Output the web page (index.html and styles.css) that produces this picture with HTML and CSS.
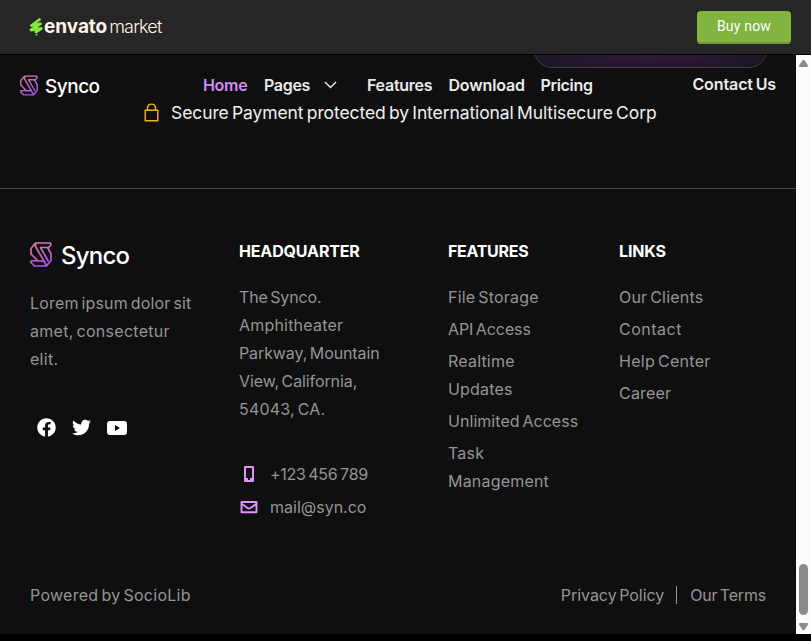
FILE: index.html
```html
<!DOCTYPE html>
<html lang="en">
<head>
<meta charset="utf-8">
<title>Synco</title>
<link rel="stylesheet" href="styles.css">
</head>
<body>
<svg class="defs" width="0" height="0" aria-hidden="true">
  <defs>
    <linearGradient id="brand" x1="0" y1="0" x2="0.35" y2="1"><stop offset="0" stop-color="#e07c9c"/><stop offset="1" stop-color="#b054ea"/></linearGradient>
    <symbol id="mark" viewBox="0 0 22 25">
      <path d="M5.500 1H20.500L21 2.500L18 6.500L21 11.500V18.500L16.500 24H4.500L1 20.500V19L7.500 18.500L1 12V6.500Z M18 5.500H10.500L18.500 19.500 M7 19H14L5.500 4.500 M5.500 1L5.500 4.500 M14 19L16.500 24" fill="none" stroke="url(#brand)" stroke-width="1.700" stroke-linejoin="round"/>
    </symbol>
  </defs>
</svg>
<header class="market">
  <div class="envato">
    <svg width="14" height="18" viewBox="0 0 14 18"><path d="M10.500 1.500L2.500 7.500L11.500 5.800L2 12L12.300 10.500L7 14" fill="none" stroke="#82e843" stroke-width="2.800" stroke-linecap="round" stroke-linejoin="round"/><circle cx="7.500" cy="16.700" r="0.900" fill="#82e843"/></svg>
    <span class="envato-name">envato</span><span class="envato-sub">market</span>
  </div>
  <a class="buy">Buy now</a>
</header>
<div class="frame">
  <main class="page">
    <div class="promo"></div>
    <nav class="nav">
      <div class="logo"><svg width="18" height="21"><use href="#mark"/></svg><span>Synco</span></div>
      <div class="menu">
        <a class="m-home">Home</a><a class="m-pages">Pages</a>
        <svg class="chev" width="13" height="8" viewBox="0 0 13 8"><path d="M1 1L6.5 6.5L12 1" fill="none" stroke="#e6e6e6" stroke-width="1.5"/></svg>
        <a class="m-features">Features</a><a class="m-download">Download</a><a class="m-pricing">Pricing</a>
      </div>
      <a class="m-contact">Contact Us</a>
    </nav>
    <div class="secure">
      <svg width="16" height="19" viewBox="0 0 16 19"><path d="M1.200 7.200H13.800V17.700H1.200ZM3.500 7V5.200C3.500 -0.200 11.500 -0.200 11.500 5.200V7" fill="none" stroke="#fbb216" stroke-width="1.4" stroke-linejoin="round"/></svg>
      <span>Secure Payment protected by International Multisecure Corp</span>
    </div>
    <footer class="footer">
      <div class="cols">
        <section>
          <div class="logo big"><svg width="22" height="25"><use href="#mark"/></svg><span>Synco</span></div>
          <p class="about"><span class="lead">Lorem ipsum dolor sit</span><br><span class="mid">amet, consectetur</span><br><span class="mid">elit.</span></p>
          <div class="social">
            <svg width="19" height="19" viewBox="0 0 512 512"><path fill="#fff" d="M504 256C504 119 393 8 256 8S8 119 8 256c0 123.800 90.700 226.400 209.300 245V327.700h-63V256h63v-54.600c0-62.200 37-96.500 93.700-96.500 27.100 0 55.500 4.800 55.500 4.800v61h-31.300c-30.800 0-40.400 19.100-40.400 38.700V256h68.800l-11 71.700h-57.800V501C413.300 482.400 504 379.800 504 256z"/></svg>
            <svg width="19" height="19" viewBox="0 0 512 512"><path fill="#fff" d="M459.400 151.700c.3 4.500.3 9.100.3 13.600 0 138.700-105.600 298.600-298.600 298.600-59.500 0-114.700-17.200-161.100-47.100 8.400 1 16.600 1.300 25.300 1.300 49.100 0 94.200-16.600 130.300-44.800-46.100-1-84.800-31.200-98.100-72.800 6.500 1 13 1.600 19.800 1.600 9.400 0 18.800-1.300 27.600-3.600-48.100-9.700-84.100-52-84.100-103v-1.300c14 7.800 30.200 12.700 47.400 13.300-28.300-18.800-46.800-51-46.800-87.400 0-19.500 5.200-37.400 14.300-53 51.700 63.700 129.300 105.300 216.400 109.800-1.600-7.800-2.600-15.900-2.600-24 0-57.800 46.800-104.900 104.900-104.900 30.200 0 57.500 12.700 76.700 33.100 23.700-4.500 46.500-13.300 66.600-25.300-7.800 24.400-24.400 44.800-46.100 57.800 21.100-2.300 41.600-8.100 60.400-16.200-14.300 20.800-32.200 39.300-52.600 54.300z"/></svg>
            <svg width="20" height="14" viewBox="0 0 20 14"><rect width="20" height="14" rx="3" fill="#fff"/><path d="M8 4V10L13 7Z" fill="#0f0f0f"/></svg>
          </div>
        </section>
        <section>
          <h2 class="h-hq">Headquarter</h2>
          <p class="address"><span class="tight">The Synco.</span><br><span class="wide">Amphitheater</span><br><span class="flat">Parkway, Mountain</span><br><span class="flat">View, California,</span><br><span class="wide">54043, CA.</span></p>
          <div class="contact"><svg width="20" height="18" viewBox="0 0 20 18"><path d="M6 2H14V16H6Z" fill="none" stroke="#e093fb" stroke-width="2" stroke-linejoin="round"/><path d="M6 13H9V15H11V13H14V16H6Z" fill="#e093fb"/></svg><span class="phone">+123 456 789</span></div>
          <div class="contact"><svg width="20" height="16" viewBox="0 0 20 16"><path d="M2.500 3H17.500V13.200H2.500ZM3 5L8.500 9Q10 10 11.500 9L17 5" fill="none" stroke="#e093fb" stroke-width="1.900" stroke-linejoin="round"/></svg><span class="mail">mail@syn.co</span></div>
        </section>
        <section>
          <h2 class="h-ft">Features</h2>
          <ul><li class="wide">File Storage</li><li class="flat">API Access</li><li class="wide">Realtime<br>Updates</li><li class="even">Unlimited Access</li><li class="wide">Task<br>Management</li></ul>
        </section>
        <section>
          <h2 class="h-ln">Links</h2>
          <ul><li class="wide">Our Clients</li><li class="wider">Contact</li><li class="mid">Help Center</li><li class="wide">Career</li></ul>
        </section>
      </div>
      <div class="legal"><span class="mid">Powered by SocioLib</span><span class="policy">Privacy Policy</span><span class="terms">Our Terms</span></div>
    </footer>
  </main>
  <div class="scroll"><i class="up"></i><i class="thumb"></i><i class="down"></i></div>
</div>
</body>
</html>
```

FILE: styles.css
```css
* { box-sizing: border-box; }
body { margin: 0; height: 641px; overflow: hidden; background: #000; font-family: Inter, "Liberation Sans", sans-serif; font-size: 16px; color: #959595; white-space: nowrap; }
.defs { position: absolute; }
svg { display: block; flex: none; }
.market { height: 55px; background: #262626; border-bottom: 1px solid #000; display: flex; justify-content: space-between; padding: 0 20px 0 29px; }
.envato { display: flex; height: 52px; align-items: center; color: #fff4e8; }
.envato svg { margin-top: 2px; }
.envato-name { font-size: 19px; font-weight: 700; letter-spacing: -0.05px; margin-left: 1px; }
.envato-sub { font-size: 18px; font-weight: 300; letter-spacing: -0.8px; margin-left: 2px; }
.buy { width: 94px; height: 33px; margin-top: 11px; background: #82b440; border-radius: 4px; box-shadow: inset 0 -2px 0 #6f9a37; color: #fff; font: 14px/31px Roboto, sans-serif; letter-spacing: 0.2px; text-align: center; }
.frame { display: flex; height: 579px; }
.page { width: 796px; background: #0f0f0f; position: relative; }
.promo { position: absolute; left: 534px; top: -47px; width: 233px; height: 60px; clip-path: inset(47px 0 0 0); border: 1px solid #414045; border-radius: 18px; background: radial-gradient(ellipse 60% 50% at 50% 72%, #351a40, #17151f 100%); }
.nav { position: relative; display: flex; height: 46px; padding: 14px 20px 0; color: #ebebeb; font-weight: 600; line-height: 32px; }
.logo { display: flex; color: #fff; font-weight: 500; font-size: 19px; letter-spacing: -0.5px; width: 183px; gap: 7px; }
.logo svg { margin-top: 6px; }
.logo span { line-height: 35px; }
.menu { display: flex; width: 489px; }
.m-home { width: 61px; color: #d28cf5; letter-spacing: -0.3px; }
.m-pages { width: 60px; letter-spacing: -0.3px; }
.chev { margin: 12px 30px 0 0; }
.m-features { width: 81.500px; letter-spacing: -0.25px; }
.m-download { width: 92px; letter-spacing: -0.15px; }
.m-pricing { letter-spacing: -0.3px; }
.m-contact { line-height: 30px; letter-spacing: -0.1px; word-spacing: -1.200px; padding-left: 0.500px; }
.secure { display: flex; padding-left: 144px; height: 87px; color: #efefef; font-size: 17.500px; line-height: 24px; letter-spacing: -0.1px; word-spacing: -1.500px; }
.secure svg { margin: 2px 11px 0 0; }
.footer { border-top: 1px solid #48484a; padding: 48px 30px 0; }
.cols { display: grid; grid-template-columns: 209px 209px 171px 147px; height: 344px; }
.logo.big { font-size: 24px; letter-spacing: -0.75px; gap: 9px; height: 52px; }
.logo.big svg { margin-top: 5px; }
.logo.big span { line-height: 38px; }
p, ul { margin: 0; padding: 0; line-height: 28px; list-style: none; }
p, li, .legal { letter-spacing: 0.1px; word-spacing: -1.800px; }
.lead { letter-spacing: 0.17px; }
.flat { letter-spacing: -0.1px; }
.even { letter-spacing: 0.05px; }
.mid { letter-spacing: 0.28px; }
.wide { letter-spacing: 0.2px; }
.wider { letter-spacing: 0.5px; }
.tight { letter-spacing: -0.15px; }
.social { display: flex; align-items: center; gap: 16px; margin: 45px 0 0 7px; }
h2 { margin: 0 0 18px; font-size: 16px; line-height: 28px; font-weight: 700; letter-spacing: -0.15px; color: #fff; text-transform: uppercase; }
.h-ft { letter-spacing: -0.3px; }
li { margin-bottom: 4px; }
.address { margin-bottom: 37px; }
.contact { display: flex; align-items: center; gap: 11px; line-height: 28px; margin-bottom: 5px; }
.phone { letter-spacing: -0.25px; word-spacing: -1.700px; }
.legal { display: flex; line-height: 28px; }
.policy { margin-left: auto; padding-right: 12px; letter-spacing: -0.05px; }
.terms { padding-left: 14px; letter-spacing: -0.2px; background: linear-gradient(#959595, #959595) 0 5px / 1px 18px no-repeat; }
.scroll { width: 15px; background: #fcfcfc; display: flex; flex-direction: column; align-items: center; padding: 5px 0 4px; }
.up { width: 9px; height: 7px; background: #8b8b8b; clip-path: polygon(40% 0, 60% 0, 100% 80%, 95% 100%, 5% 100%, 0 80%); }
.thumb { width: 9px; height: 51px; border-radius: 5px; background: #8b8b8b; margin: auto 0 8px; }
.down { width: 9px; height: 7px; background: #8b8b8b; clip-path: polygon(5% 0, 95% 0, 100% 20%, 60% 100%, 40% 100%, 0 20%); }
```
